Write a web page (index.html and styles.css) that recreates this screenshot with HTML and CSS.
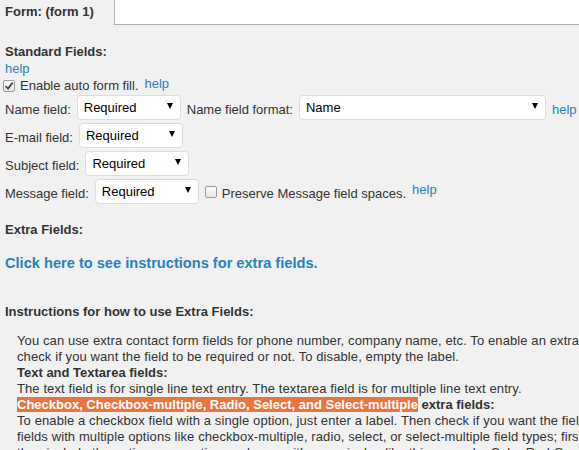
FILE: index.html
```html
<!DOCTYPE html>
<html>
<head>
<meta charset="utf-8">
<link rel="stylesheet" href="styles.css">
</head>
<body>
<div class="tabs">
  <div class="tab">Form: (form 1)</div>
  <div class="tabfill"></div>
</div>
<div class="content">
  <div class="h first">Standard Fields:</div>
  <div class="line help-line"><a class="link">help</a></div>
  <div class="cbrow">
    <span class="cb"><svg width="10" height="10" viewBox="0 0 10 10"><path d="M1.6 5.2 L4 7.6 L8.6 1.6" fill="none" stroke="#4a4a4a" stroke-width="1.9"/></svg></span>
    <span>Enable auto form fill.</span>
    <a class="link up">help</a>
  </div>
  <div class="row">
    <span class="lbl">Name field:</span>
    <div class="sel"><span>Required</span><i class="arr"></i></div>
    <span class="lbl">Name field format:</span>
    <div class="sel wide"><span>Name</span><i class="arr"></i></div>
    <a class="link lbl">help</a>
  </div>
  <div class="row">
    <span class="lbl">E-mail field:</span>
    <div class="sel"><span>Required</span><i class="arr"></i></div>
  </div>
  <div class="row">
    <span class="lbl">Subject field:</span>
    <div class="sel"><span>Required</span><i class="arr"></i></div>
  </div>
  <div class="row">
    <span class="lbl">Message field:</span>
    <div class="sel"><span>Required</span><i class="arr"></i></div>
    <span class="cb empty"></span>
    <span class="lbl tight">Preserve Message field spaces.</span>
    <a class="link up">help</a>
  </div>
  <div class="h extra">Extra Fields:</div>
  <a class="biglink">Click here to see instructions for extra fields.</a>
  <div class="h instr">Instructions for how to use Extra Fields:</div>
  <div class="para">
    You can use extra contact form fields for phone number, company name, etc. To enable an extra<br>
    check if you want the field to be required or not. To disable, empty the label.<br>
    <b>Text and Textarea fields:</b><br>
    The text field is for single line text entry. The textarea field is for multiple line text entry.<br>
    <b><span class="hl">Checkbox, Checkbox-multiple, Radio, Select, and Select-multiple</span> extra fields:</b><br>
    To enable a checkbox field with a single option, just enter a label. Then check if you want the field<br>
    fields with multiple options like checkbox-multiple, radio, select, or select-multiple field types; first<br>
    then include the options separating each one with a semicolon like this example: Color:Red;Green
  </div>
</div>
</body>
</html>
```

FILE: styles.css
```css
html, body {
  margin: 0;
  padding: 0;
}
body {
  background: #f1f1f1;
  font-family: "Liberation Sans", Arial, sans-serif;
  font-size: 13px;
  line-height: 16px;
  color: #333;
  width: 579px;
  height: 450px;
  overflow: hidden;
}
.tabs {
  display: flex;
  height: 25px;
}
.tab {
  width: 109px;
  padding-left: 5px;
  font-weight: bold;
  line-height: 24px;
  color: #333;
}
.tabfill {
  flex: 1;
  height: 24px;
  background: #fff;
  border-left: 1px solid #b0b0b0;
  border-bottom: 1px solid #b0b0b0;
}
.content {
  padding-left: 5px;
}
.h {
  font-weight: bold;
  color: #333;
}
.first {
  margin-top: 19px;
}
.link {
  color: #2a81ba;
  text-decoration: none;
}
.help-line {
  margin-top: 1px;
}
.cbrow {
  display: flex;
  align-items: center;
  height: 17px;
  gap: 5px;
  margin-left: -2px;
}
.up {
  position: relative;
  top: -2px;
}
.cbrow .up {
  margin-left: 1px;
}
.cb {
  display: inline-flex;
  align-items: center;
  justify-content: center;
  width: 10px;
  height: 10px;
  border: 1px solid #9a9a9a;
  border-radius: 2px;
  background: linear-gradient(#fdfdfd, #e8e8e8);
  flex: none;
}
.cb svg {
  display: block;
}
.row {
  display: flex;
  align-items: center;
  gap: 6px;
  height: 25px;
  margin-bottom: 3px;
}
.cbrow + .row {
  margin-top: 1px;
}
.lbl {
  position: relative;
  top: 2px;
}
.tight {
  margin-left: -1px;
}
.sel {
  box-sizing: border-box;
  width: 104px;
  height: 25px;
  background: #fff;
  border: 1px solid #dcdcdc;
  border-radius: 4px;
  display: flex;
  align-items: center;
  justify-content: space-between;
  padding: 0 7px 0 6px;
  color: #000;
  flex: none;
}
.sel.wide {
  width: 247px;
}
.arr {
  width: 0;
  height: 0;
  border-left: 3px solid transparent;
  border-right: 3px solid transparent;
  border-top: 6px solid #000;
  margin-top: -3px;
}
.extra {
  margin-top: 18px;
}
.biglink {
  display: block;
  margin-top: 15px;
  font-size: 14.625px;
  line-height: 20px;
  font-weight: bold;
  color: #2a81ba;
  text-decoration: none;
  white-space: nowrap;
}
.instr {
  margin-top: 31px;
}
.para {
  margin-top: 13px;
  padding-left: 12px;
  white-space: nowrap;
  color: #333;
  letter-spacing: 0.1px;
}
.para b {
  color: #333;
  letter-spacing: 0;
}
.hl {
  background: #e8743e;
  color: #fff;
}
```
